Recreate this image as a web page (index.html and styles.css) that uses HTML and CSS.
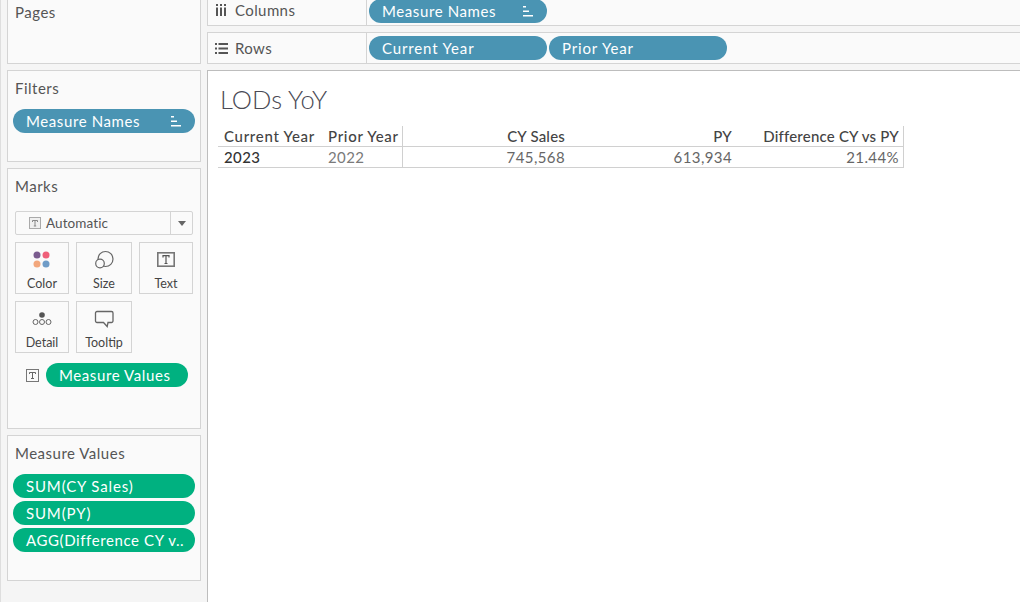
FILE: index.html
```html
<!DOCTYPE html>
<html lang="en">
<head>
<meta charset="utf-8">
<title>LODs YoY</title>
<link rel="stylesheet" href="styles.css">
</head>
<body>
<div class="app">
  <aside class="sidebar">
    <section class="card card-pages"><h2 class="card-title">Pages</h2></section>
    <section class="card card-filters">
      <h2 class="card-title">Filters</h2>
      <div class="pill pill-blue pill-wide"><span class="pill-text">Measure Names</span>
        <svg class="sort" width="12" height="11" viewBox="0 0 12 11"><path d="M1 0h3v1.500H1zM1 4.500h6V6H1zM1 9h10v1.500H1z" fill="#fff"/></svg>
      </div>
    </section>
    <section class="card card-marks">
      <h2 class="card-title">Marks</h2>
      <div class="dropdown">
        <span class="dd-main">
          <svg class="t-icon-light" width="12" height="12" viewBox="0 0 12 12"><rect x=".5" y=".5" width="11" height="11" fill="#f0f0f0" stroke="#aaa"/><path d="M3.500 5V3.500h5V5M6 3.500V9M4.800 9h2.400" fill="none" stroke="#888"/></svg>
          Automatic
        </span>
        <span class="dd-arrow"><svg width="8" height="5" viewBox="0 0 8 5"><path d="M0 0h8L4 5z" fill="#666"/></svg></span>
      </div>
      <div class="mark-grid">
        <div class="mark-btn">
          <svg class="mark-icon" width="24" height="24" viewBox="0 0 24 24"><circle cx="7" cy="7" r="3.500" fill="#7b5c8f"/><circle cx="16" cy="7" r="3.500" fill="#ef6079"/><circle cx="7" cy="16" r="3.500" fill="#f2a77c"/><circle cx="16" cy="16" r="3.500" fill="#6f9cc7"/></svg>
          <span>Color</span>
        </div>
        <div class="mark-btn">
          <svg class="mark-icon" width="24" height="24" viewBox="0 0 24 24"><circle cx="13.500" cy="11" r="7.500" fill="none" stroke="#666" stroke-width="1.200"/><circle cx="8" cy="15.500" r="4.300" fill="#fafafa" stroke="#666" stroke-width="1.200"/></svg>
          <span>Size</span>
        </div>
        <div class="mark-btn">
          <svg class="mark-icon" width="24" height="24" viewBox="0 0 24 24"><rect x="3.800" y="4.800" width="16.400" height="13.400" fill="none" stroke="#777" stroke-width="1.600"/><path d="M9 9.500V7.700h6v1.800M12 7.700V15.500M10.500 15.500h3" fill="none" stroke="#555" stroke-width="1.200"/></svg>
          <span>Text</span>
        </div>
        <div class="mark-btn">
          <svg class="mark-icon" width="24" height="24" viewBox="0 0 24 24"><circle cx="12" cy="8" r="2.800" fill="#555"/><circle cx="5.500" cy="15" r="2.500" fill="none" stroke="#666"/><circle cx="12" cy="15" r="2.500" fill="none" stroke="#666"/><circle cx="18.500" cy="15" r="2.500" fill="none" stroke="#666"/></svg>
          <span>Detail</span>
        </div>
        <div class="mark-btn">
          <svg class="mark-icon" width="24" height="24" viewBox="0 0 24 24"><path d="M5 4.500h14.500a1.500 1.500 0 0 1 1.500 1.500v8a1.500 1.500 0 0 1-1.500 1.500h-3.500l-.8 4-3.700-4H5A1.500 1.500 0 0 1 3.500 14V6A1.500 1.500 0 0 1 5 4.500z" fill="none" stroke="#666" stroke-width="1.300"/></svg>
          <span>Tooltip</span>
        </div>
      </div>
      <div class="mark-field">
        <svg class="t-icon" width="13" height="13" viewBox="0 0 13 13"><rect x=".5" y=".5" width="12" height="12" fill="none" stroke="#777"/><path d="M3.500 5V3.500h6V5M6.500 3.500v6M5 9.500h3" fill="none" stroke="#666"/></svg>
        <div class="pill pill-green pill-field"><span class="pill-text">Measure Values</span></div>
      </div>
    </section>
    <section class="card card-values">
      <h2 class="card-title">Measure Values</h2>
      <div class="pill-stack">
        <div class="pill pill-green pill-wide pill-loose"><span class="pill-text">SUM(CY Sales)</span></div>
        <div class="pill pill-green pill-wide pill-loose"><span class="pill-text">SUM(PY)</span></div>
        <div class="pill pill-green pill-wide"><span class="pill-text">AGG(Difference CY v..</span></div>
      </div>
    </section>
  </aside>
  <main class="main">
    <div class="shelf shelf-columns">
      <div class="shelf-label">
        <svg class="shelf-icon" width="13" height="12" viewBox="0 0 13 12"><path d="M1 0h2v2H1zM5 0h2v2H5zM9 0h2v2H9zM1 3.500h2V12H1zM5 3.500h2V12H5zM9 3.500h2V12H9z" fill="#555"/></svg>
        <span>Columns</span>
      </div>
      <div class="shelf-pills">
        <div class="pill pill-blue pill-shelf"><span class="pill-text">Measure Names</span>
          <svg class="sort" width="12" height="11" viewBox="0 0 12 11"><path d="M1 0h3v1.500H1zM1 4.500h6V6H1zM1 9h10v1.500H1z" fill="#fff"/></svg>
        </div>
      </div>
    </div>
    <div class="shelf shelf-rows">
      <div class="shelf-label">
        <svg class="shelf-icon" width="13" height="11" viewBox="0 0 13 11"><path d="M0 0h2v2H0zM3.500 0H13v2H3.500zM0 4.500h2v2H0zM3.500 4.500H13v2H3.500zM0 9h2v2H0zM3.500 9H13v2H3.500z" fill="#555"/></svg>
        <span>Rows</span>
      </div>
      <div class="shelf-pills">
        <div class="pill pill-blue pill-shelf pill-loose"><span class="pill-text">Current Year</span></div>
        <div class="pill pill-blue pill-shelf pill-loose"><span class="pill-text">Prior Year</span></div>
      </div>
    </div>
    <div class="canvas">
      <h1 class="view-title">LODs YoY</h1>
      <div class="crosstab">
        <div class="ct-cell ct-head ct-row-head">Current Year</div>
        <div class="ct-cell ct-head ct-row-head ct-prior">Prior Year</div>
        <div class="ct-cell ct-head ct-num">CY Sales</div>
        <div class="ct-cell ct-head ct-num">PY</div>
        <div class="ct-cell ct-head ct-num ct-last">Difference CY vs PY</div>
        <div class="ct-cell ct-val ct-year">2023</div>
        <div class="ct-cell ct-val ct-prior ct-light">2022</div>
        <div class="ct-cell ct-val ct-num">745,568</div>
        <div class="ct-cell ct-val ct-num">613,934</div>
        <div class="ct-cell ct-val ct-num ct-last">21.44%</div>
      </div>
    </div>
  </main>
</div>
</body>
</html>
```

FILE: styles.css
```css
* { box-sizing: border-box; }
html, body { margin: 0; height: 100%; overflow: hidden; }
body {
  background: #f5f5f5;
  font-family: "Lato", "Liberation Sans", sans-serif;
  color: #555;
}
.app { display: flex; height: 602px; width: 1020px; }

.sidebar {
  width: 207px;
  flex: none;
  padding-left: 6px;
  border-left: 1px solid #dedede;
  display: flex;
  flex-direction: column;
  gap: 6px;
  height: 602px;
}
.card {
  width: 194px;
  background: #fafafa;
  border: 1px solid #d4d4d4;
  padding: 0 5px;
  flex: none;
}
.card-title {
  margin: 0;
  font-size: 15px;
  letter-spacing: .5px;
  font-weight: 400;
  line-height: 18px;
  color: #555;
  padding-left: 2px;
}
.card-pages { height: 64px; border-top: 0; padding-top: 3px; }
.card-filters { height: 92px; padding-top: 8px; }
.card-marks { height: 261px; padding-top: 8px; }
.card-values { height: 146px; padding-top: 8px; }

.pill {
  display: flex;
  align-items: center;
  height: 24px;
  border-radius: 12px;
  color: #fff;
  font-size: 15px;
  letter-spacing: .6px;
  padding-left: 13px;
  white-space: nowrap;
}
.pill-loose { letter-spacing: .85px; }
.pill-text { flex: 1; }
.pill-blue { background: #4a94b3; }
.pill-green { background: #00b180; }
.pill-wide { width: 182px; }
.pill-shelf { width: 178px; }
.sort { flex: none; margin-right: 13px; }

.card-filters .pill { margin-top: 12px; }

.dropdown {
  display: flex;
  height: 24px;
  margin: 16px 2px 0;
  width: 178px;
  border: 1px solid #d4d4d4;
  border-radius: 2px;
  font-size: 13.5px;
  letter-spacing: .1px;
  color: #555;
}
.dd-main { flex: 1; display: flex; align-items: center; gap: 5px; padding-left: 13px; }
.dd-arrow { width: 22px; border-left: 1px solid #d4d4d4; display: flex; align-items: center; justify-content: center; }

.mark-grid {
  display: grid;
  grid-template-columns: 54px 56px 54px;
  grid-auto-rows: 52px;
  gap: 7px;
  margin: 7px 2px 0;
}
.mark-btn {
  border: 1px solid #d4d4d4;
  display: flex;
  flex-direction: column;
  align-items: center;
  font-size: 12.5px;
  line-height: 15px;
  color: #444;
  padding-top: 5px;
}
.mark-icon { margin-bottom: 4px; }

.mark-field { display: flex; align-items: center; margin: 10px 0 0 13px; gap: 7px; }
.pill-field { width: 142px; }
.t-icon { flex: none; }

.pill-stack { display: flex; flex-direction: column; gap: 3px; margin-top: 12px; }

.main { flex: 1; display: flex; flex-direction: column; min-width: 0; }
.shelf {
  display: flex;
  background: #fafafa;
  border: 1px solid #d4d4d4;
  border-right: 0;
  flex: none;
}
.shelf-columns { height: 26px; border-top: 0; margin-bottom: 6px; }
.shelf-rows { height: 32px; margin-bottom: 6px; }
.shelf-label {
  width: 159px;
  flex: none;
  border-right: 1px solid #d4d4d4;
  display: flex;
  align-items: center;
  gap: 7px;
  padding-left: 7px;
  font-size: 15px;
  letter-spacing: .4px;
  color: #555;
}
.shelf-pills { display: flex; gap: 2px; padding-left: 2px; align-items: center; }
.shelf-columns .shelf-pills { align-items: flex-end; padding-bottom: 2px; }
.shelf-columns .shelf-label { padding-bottom: 6px; }

.canvas {
  flex: 1;
  background: #fff;
  border-top: 1px solid #bdbdbd;
  border-left: 1px solid #bdbdbd;
  padding-left: 10px;
}
.view-title {
  margin: 0;
  padding: 12px 0 0 2px;
  font-size: 25.5px;
  line-height: 32px;
  font-weight: 300;
  color: #4a4a55;
}
.crosstab {
  display: grid;
  grid-template-columns: 104px 81px 167px 167px 167px;
  grid-template-rows: 21px 21px;
  width: 686px;
  margin-top: 11px;
}
.ct-cell {
  font-size: 15px;
  letter-spacing: .4px;
  line-height: 21px;
  padding: 0 5px 0 6px;
  white-space: nowrap;
  border-bottom: 1px solid #d0d0d0;
}
.ct-head { color: #444; font-weight: 500; letter-spacing: .2px; }
.ct-row-head { letter-spacing: .7px; padding-right: 0; }
.ct-val { color: #666; }
.ct-year { color: #333; font-weight: 500; }
.ct-light { color: #7a7a7a; }
.ct-prior { border-right: 1px solid #d0d0d0; }
.ct-num { text-align: right; }
.ct-last { border-right: 1px solid #d0d0d0; padding-right: 4px; }
```
